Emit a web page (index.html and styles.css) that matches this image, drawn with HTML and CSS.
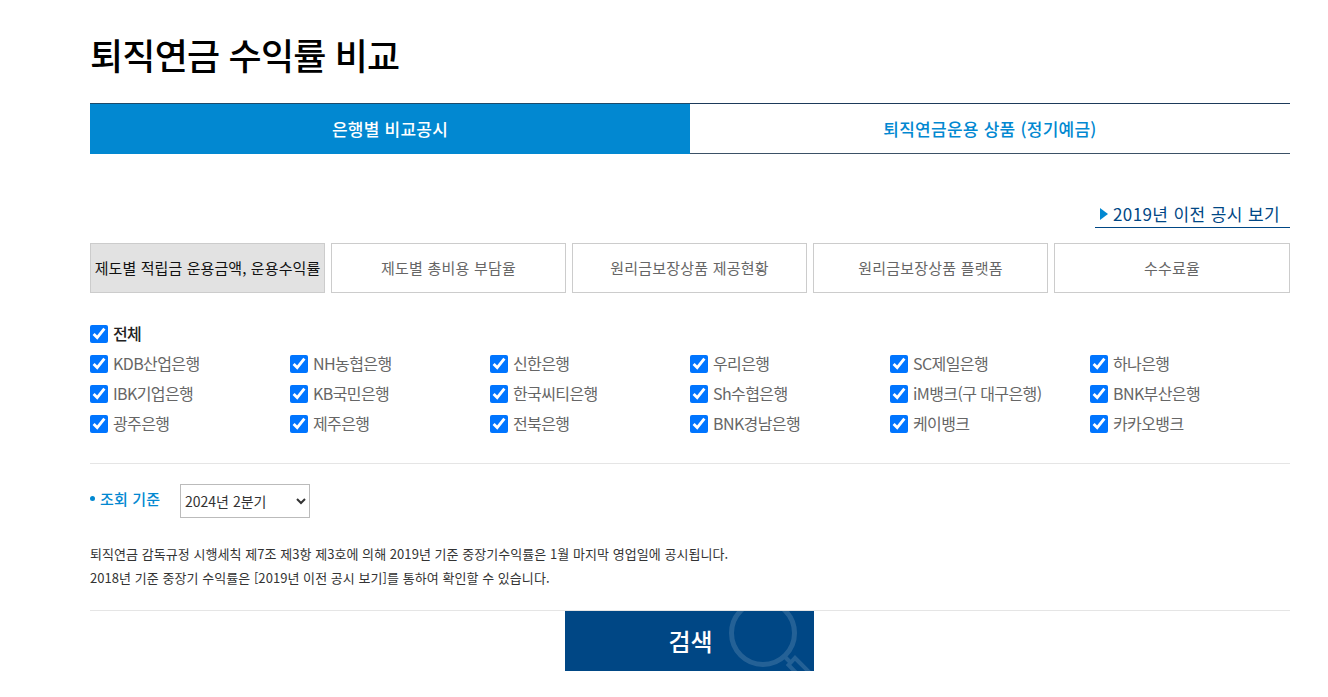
FILE: index.html
```html
<!DOCTYPE html>
<html lang="ko">
<head>
<meta charset="utf-8">
<title>퇴직연금 수익률 비교</title>
<link rel="stylesheet" href="styles.css">
</head>
<body>
<main class="page">
  <h1 class="title">퇴직연금 수익률 비교</h1>
  <div class="tabs">
    <a class="tab tab-on">은행별 비교공시</a>
    <a class="tab">퇴직연금운용 상품 (정기예금)</a>
  </div>
  <div class="prev-row">
    <a class="prev-link"><span class="prev-arrow"></span>2019년 이전 공시 보기</a>
  </div>
  <div class="subtabs">
    <a class="subtab subtab-on">제도별 적립금 운용금액, 운용수익률</a>
    <a class="subtab">제도별 총비용 부담율</a>
    <a class="subtab">원리금보장상품 제공현황</a>
    <a class="subtab">원리금보장상품 플랫폼</a>
    <a class="subtab">수수료율</a>
  </div>
  <div class="checks">
    <label class="check check-all"><input type="checkbox" checked><span>전체</span></label>
    <div class="check-grid">
      <label class="check"><input type="checkbox" checked><span>KDB산업은행</span></label>
      <label class="check"><input type="checkbox" checked><span>NH농협은행</span></label>
      <label class="check"><input type="checkbox" checked><span>신한은행</span></label>
      <label class="check"><input type="checkbox" checked><span>우리은행</span></label>
      <label class="check"><input type="checkbox" checked><span>SC제일은행</span></label>
      <label class="check"><input type="checkbox" checked><span>하나은행</span></label>
      <label class="check"><input type="checkbox" checked><span>IBK기업은행</span></label>
      <label class="check"><input type="checkbox" checked><span>KB국민은행</span></label>
      <label class="check"><input type="checkbox" checked><span>한국씨티은행</span></label>
      <label class="check"><input type="checkbox" checked><span>Sh수협은행</span></label>
      <label class="check"><input type="checkbox" checked><span>iM뱅크(구 대구은행)</span></label>
      <label class="check"><input type="checkbox" checked><span>BNK부산은행</span></label>
      <label class="check"><input type="checkbox" checked><span>광주은행</span></label>
      <label class="check"><input type="checkbox" checked><span>제주은행</span></label>
      <label class="check"><input type="checkbox" checked><span>전북은행</span></label>
      <label class="check"><input type="checkbox" checked><span>BNK경남은행</span></label>
      <label class="check"><input type="checkbox" checked><span>케이뱅크</span></label>
      <label class="check"><input type="checkbox" checked><span>카카오뱅크</span></label>
    </div>
  </div>
  <div class="period">
    <span class="period-label">조회 기준</span>
    <select class="period-select"><option>2024년 2분기</option></select>
  </div>
  <div class="notes">
    <p>퇴직연금 감독규정 시행세칙 제7조 제3항 제3호에 의해 2019년 기준 중장기수익률은 1월 마지막 영업일에 공시됩니다.</p>
    <p>2018년 기준 중장기 수익률은 [2019년 이전 공시 보기]를 통하여 확인할 수 있습니다.</p>
  </div>
  <div class="actions">
    <button class="search" type="button">검색
      <svg class="search-icon" width="90" height="60" viewBox="0 0 90 60" aria-hidden="true">
        <circle cx="39" cy="22" r="31.5" fill="none" stroke="#fff" stroke-width="5"/>
        <path d="M60 45l6 6" fill="none" stroke="#fff" stroke-width="4"/>
        <path d="M64.5 54l6.5-7 24 24-7 7z" fill="none" stroke="#fff" stroke-width="4"/>
      </svg>
    </button>
  </div>
</main>
</body>
</html>
```
FILE: styles.css
```css
* { box-sizing: border-box; }
html, body { margin: 0; padding: 0; background: #fff; }
body { font-family: "Noto Sans CJK KR", "Noto Sans", sans-serif; color: #333; height: 697px; overflow: hidden; }
.page { width: 1200px; margin-left: 90px; }
.title { margin: 0; padding-top: 31px; height: 103px; font-size: 36px; line-height: 46px; font-weight: 500; letter-spacing: -0.8px; color: #000; }
.tabs { display: flex; height: 51px; border-top: 1px solid #1d3a5a; border-bottom: 1px solid #3b5166; }
.tab { flex: 0 0 600px; display: flex; align-items: center; justify-content: center; font-size: 17px; font-weight: 500; color: #0288d1; letter-spacing: 0.25px; }
.tab-on { background: #0288d1; color: #fff; margin-top: -1px; margin-bottom: -1px; padding-bottom: 2px; border-top: 1px solid #1d4a6a; }
.prev-row { display: flex; justify-content: flex-end; margin-top: 49px; }
.prev-link { display: flex; align-items: center; width: 195px; height: 25px; padding: 0 0 2px 5px; border-bottom: 1px solid #004785; font-size: 17px; line-height: 24px; color: #004785; letter-spacing: 0.4px; }
.prev-arrow { width: 0; height: 0; margin-right: 5px; border-left: 8px solid #0288d1; border-top: 6px solid transparent; border-bottom: 6px solid transparent; }
.subtabs { display: grid; grid-template-columns: repeat(4, 235px) 236px; gap: 6px; margin-top: 15px; }
.subtab { height: 50px; display: flex; align-items: center; justify-content: center; padding-bottom: 2px; border: 1px solid #ccc; font-size: 15px; color: #666; letter-spacing: 0.2px; white-space: nowrap; }
.subtab-on { background: #e2e2e2; color: #111; letter-spacing: 0.1px; }
.checks { margin-top: 26px; padding-bottom: 24px; border-bottom: 1px solid #e5e5e5; }
.check { display: flex; align-items: center; height: 30px; font-size: 16px; color: #666; letter-spacing: -0.6px; }
.check span { margin-bottom: 2px; }
.check input { width: 18px; height: 18px; margin: 0 5px 0 0; accent-color: #0075ff; }
.check-all { font-weight: 500; color: #222; }
.check-grid { display: grid; grid-template-columns: repeat(6, 200px); }
.period { display: flex; align-items: center; margin-top: 20px; height: 34px; }
.period-label { width: 90px; margin-bottom: 6px; font-size: 15px; font-weight: 500; color: #0288d1; letter-spacing: 0.15px; display: flex; align-items: center; }
.period-label::before { content: ""; width: 5px; height: 5px; border-radius: 50%; background: #0288d1; margin-right: 5px; }
.period-select { width: 130px; height: 34px; font-family: inherit; font-size: 14px; color: #333; border: 1px solid #bbb; background-color: #fff; padding-left: 0; }
.notes { margin-top: 24px; padding-bottom: 20px; border-bottom: 1px solid #e5e5e5; font-size: 13px; line-height: 24px; color: #333; letter-spacing: 0.05px; }
.notes p { margin: 0; }
.actions { padding-left: 475px; }
.search { position: relative; display: block; width: 249px; height: 60px; overflow: hidden; border: 0; padding: 0 0 2px 2px; background: #004785; color: #fff; font-family: inherit; font-size: 24px; font-weight: 500; }
.search-icon { position: absolute; right: 0; top: 0; opacity: 0.14; }
```
